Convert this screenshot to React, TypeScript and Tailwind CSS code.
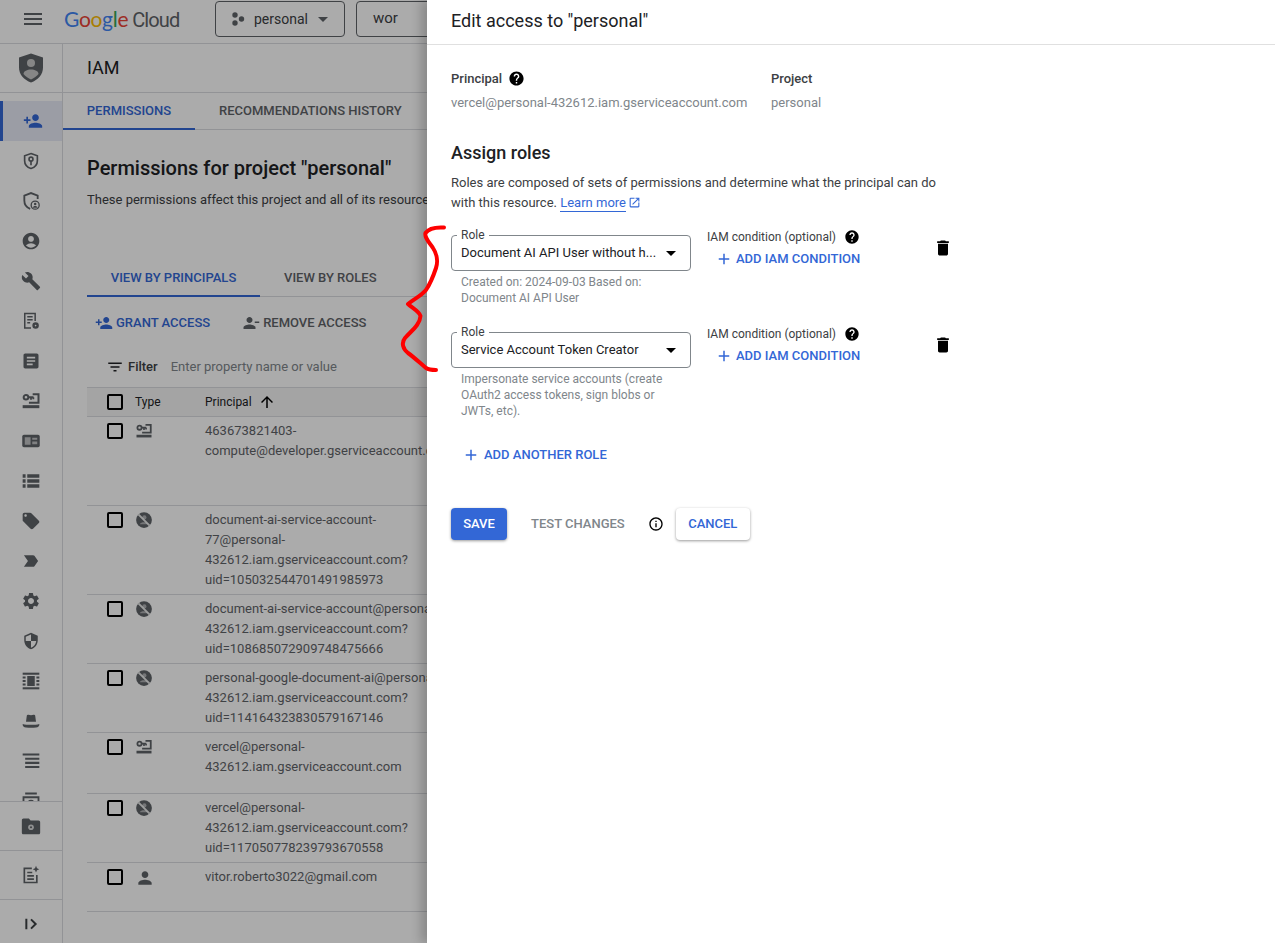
import React from "react";
import {
  MdMenu, MdArrowDropDown, MdPersonAdd, MdAccountCircle, MdBuild, MdArticle,
  MdLocalOffer, MdLabelImportant, MdSettings, MdSecurity, MdPersonRemove, MdFilterList,
  MdArrowUpward, MdPerson, MdHelp, MdAdd, MdDelete, MdInfoOutline, MdOpenInNew,
} from "react-icons/md";

const SA = ({ size = 18 }: { size?: number }) => (
  <svg width={size} height={size} viewBox="0 0 24 24" fill="none" stroke="currentColor">
    <circle cx="6" cy="7.500" r="2.800" strokeWidth="2.400" />
    <path d="M8.500 7.500h6.500M12 7.500v3M14.800 7.500v2.500" strokeWidth="2.200" />
    <path d="M14 3.800h7v10.400H9.500" strokeWidth="2.400" />
    <rect x="2" y="17" width="20" height="3.600" fill="currentColor" stroke="none" />
  </svg>
);
const Deleted = ({ size = 18 }: { size?: number }) => (
  <svg width={size} height={size} viewBox="0 0 24 24">
    <circle cx="12" cy="12" r="10.500" fill="currentColor" />
    <circle cx="12.500" cy="8.500" r="2.800" fill="#fff" opacity="0.5" />
    <path d="M6.500 17.500c1-3.500 10-3.500 11 0z" fill="#fff" opacity="0.5" />
    <path d="M4.500 4.500l15 15" stroke="#fff" strokeWidth="2.600" opacity="0.85" />
  </svg>
);
const ShieldKey = () => (
  <svg width="18" height="18" viewBox="0 0 24 24" fill="none" stroke="currentColor" strokeWidth="2.200">
    <path d="M12 2l8.500 3v6.500c0 5-3.600 8.800-8.500 10.500-4.900-1.700-8.500-5.500-8.500-10.500V5z" />
    <circle cx="12" cy="9.500" r="2.600" />
    <path d="M12 12v5.500" />
  </svg>
);
const ShieldUser = () => (
  <svg width="20" height="20" viewBox="0 0 24 24" fill="none" stroke="currentColor" strokeWidth="2.200">
    <path d="M11 21.500c-4.200-1.600-7-5.200-7-10v-6l8-3 8 3v4" />
    <circle cx="17" cy="17" r="4.800" strokeWidth="1.600" />
    <circle cx="17" cy="15.600" r="1.500" fill="currentColor" stroke="none" />
    <path d="M14 20c.5-2.500 5.500-2.500 6 0z" fill="currentColor" stroke="none" />
  </svg>
);
const DocGear = () => (
  <svg width="20" height="20" viewBox="0 0 24 24" fill="none" stroke="currentColor" strokeWidth="1.800">
    <path d="M12 20.500H4.500V3h12.500v9" />
    <path d="M7.500 7h6.500M7.500 10.500h6.500M7.500 14h3.500" />
    <circle cx="17.500" cy="17.500" r="3" fill="currentColor" />
    <circle cx="17.500" cy="17.500" r="1" fill="#fff" stroke="none" />
  </svg>
);
const IdCard = () => (
  <svg width="20" height="20" viewBox="0 0 24 24">
    <rect x="1.500" y="4.500" width="21" height="15" rx="2" fill="currentColor" />
    <rect x="4.500" y="7.500" width="7" height="9" fill="#fff" opacity="0.6" />
    <path d="M13.500 8h6v2.500h-6zM13.500 12.500h6V16h-6z" fill="#fff" opacity="0.6" />
  </svg>
);
const ThickList = () => (
  <svg width="20" height="20" viewBox="0 0 24 24" fill="currentColor">
    <path d="M2 4h3.500v4H2zM7.500 4H22v4H7.500zM2 10h3.500v4H2zM7.500 10H22v4H7.500zM2 16h3.500v4H2zM7.500 16H22v4H7.500z" />
  </svg>
);
const Stacked = () => (
  <svg width="20" height="20" viewBox="0 0 24 24" fill="currentColor">
    <rect x="2" y="2" width="20" height="2.500" />
    <rect x="2" y="19.500" width="20" height="2.500" />
    <rect x="7.500" y="6" width="9" height="12" />
    <path d="M2 6.500h3.500v2.500H2zM2 10.700h3.500v2.600H2zM2 15h3.500v2.500H2zM18.500 6.500H22v2.500h-3.500zM18.500 10.700H22v2.600h-3.500zM18.500 15H22v2.500h-3.500z" />
  </svg>
);
const Hat = () => (
  <svg width="20" height="20" viewBox="0 0 24 24" fill="currentColor">
    <path d="M6 13l1-7.500c.2-1 1-1.300 2-1 2 .7 4 .7 6 0 1-.3 1.800 0 2 1l1 7.500z" />
    <path d="M2 15.500c5 1.500 15 1.500 20 0 .3 2.800-1.500 4-4 4.300-4 .5-8 .5-12 0-2.500-.3-4.300-1.500-4-4.300z" />
  </svg>
);
const Lines = () => (
  <svg width="20" height="20" viewBox="0 0 24 24" fill="currentColor">
    <path d="M2 3h20v2.500H2zM5 8h17v2.500H5zM5 13h17v2.500H5zM5 18h17v2.500H5z" />
  </svg>
);
const ClippedIcon = () => (
  <svg width="20" height="20" viewBox="0 0 24 24" fill="none" stroke="currentColor" strokeWidth="2.200">
    <path d="M5 3h14M3 7.500h18v14H3z" />
    <circle cx="12" cy="14.500" r="3" fill="currentColor" />
  </svg>
);
const FolderGear = () => (
  <svg width="20" height="20" viewBox="0 0 24 24" fill="currentColor">
    <path d="M1 5c0-1 .8-2 2-2h6.500l2 2.500H21c1.200 0 2 1 2 2V20c0 1-.8 2-2 2H3c-1.200 0-2-1-2-2z" />
    <circle cx="12" cy="13.500" r="3.400" fill="#fff" opacity="0.75" />
    <circle cx="12" cy="13.500" r="1.300" fill="currentColor" />
  </svg>
);
const DocSpark = () => (
  <svg width="20" height="20" viewBox="0 0 24 24" fill="none" stroke="currentColor" strokeWidth="2">
    <path d="M13 4H4v17h15v-9" />
    <path d="M7.500 9h6M7.500 13h8M7.500 17h8" />
    <path d="M18 1l1.200 2.800L22 5l-2.800 1.200L18 9l-1.200-2.800L14 5l2.800-1.200z" fill="currentColor" stroke="none" />
  </svg>
);
const Collapse = () => (
  <svg width="16" height="16" viewBox="0 0 24 24" fill="none" stroke="currentColor" strokeWidth="3">
    <path d="M5 4v16M12 5l7 7-7 7" />
  </svg>
);
const IamLogo = () => (
  <svg width="26" height="30" viewBox="0 0 26 30">
    <path d="M13 0.500l12 4v10c0 7-5 12.500-12 15-7-2.500-12-8-12-15v-10z" fill="#5f6368" />
    <circle cx="13" cy="10" r="4" fill="#c8c8c8" />
    <path d="M5.500 21c0-6 15-6 15 0-2 2.500-5 4.500-7.500 5.500-2.500-1-5.500-3-7.500-5.500z" fill="#c8c8c8" />
  </svg>
);

const navIcons = [
  <MdPersonAdd size={20} />, <ShieldKey />, <ShieldUser />, <MdAccountCircle size={20} />, <MdBuild size={20} />,
  <DocGear />, <MdArticle size={20} />, <SA size={20} />, <IdCard />, <ThickList />,
  <MdLocalOffer size={20} />, <MdLabelImportant size={20} />, <MdSettings size={20} />, <MdSecurity size={18} />,
  <Stacked />, <Hat />, <Lines />, <ClippedIcon />,
];

type Row = { h: string; icon: React.ReactNode; lines: string[] };
const rows: Row[] = [
  { h: "h-[89px]", icon: <SA />, lines: ["463673821403-", "compute@developer.gserviceaccount.com"] },
  { h: "h-[89px]", icon: <Deleted />, lines: ["document-ai-service-account-", "77@personal-", "432612.iam.gserviceaccount.com?", "uid=105032544701491985973"] },
  { h: "h-[69px]", icon: <Deleted />, lines: ["document-ai-service-account@personal-", "432612.iam.gserviceaccount.com?", "uid=108685072909748475666"] },
  { h: "h-[69px]", icon: <Deleted />, lines: ["personal-google-document-ai@personal-", "432612.iam.gserviceaccount.com?", "uid=114164323830579167146"] },
  { h: "h-[61px]", icon: <SA />, lines: ["vercel@personal-", "432612.iam.gserviceaccount.com"] },
  { h: "h-[69px]", icon: <Deleted />, lines: ["vercel@personal-", "432612.iam.gserviceaccount.com?", "uid=117050778239793670558"] },
  { h: "h-[49px]", icon: <MdPerson size={20} />, lines: ["vitor.roberto3022@gmail.com"] },
];

const Check = () => <div className="w-4 h-4 border-2 border-black rounded-[2px] shrink-0" />;

const RoleRow = ({ value, hint, h }: { value: string; hint: string[]; h: string }) => (
  <div className={`flex ${h}`}>
    <div className="w-[240px] shrink-0">
      <div className="relative h-9 border border-[#80868b] rounded-[4px] flex items-center pl-[9px] pr-[7px] text-[13px] text-[#202124]">
        <span className="absolute -top-[8px] left-[5px] bg-white px-[4px] text-[12px] leading-[14px] text-[#3c4043]">Role</span>
        <span className="flex-1 whitespace-nowrap overflow-hidden">{value}</span>
        <MdArrowDropDown size={24} className="text-black" />
      </div>
      <div className="pl-[10px] pt-[3px] text-[12px] leading-4 text-[#80868b]">
        {hint.map((l) => <div key={l} className="whitespace-nowrap">{l}</div>)}
      </div>
    </div>
    <div className="ml-4 w-[228px] shrink-0">
      <div className="flex items-center h-4 text-[12px] text-[#3c4043] mt-[-6px]">
        <span>IAM condition (optional)</span>
        <MdHelp size={16} className="ml-[8px] text-black" />
      </div>
      <div className="flex items-center mt-[4px] ml-[9px] text-[13px] font-medium text-[#3367d6] whitespace-nowrap">
        <MdAdd size={18} className="mr-[3px] -ml-[1px]" />
        <span>ADD IAM CONDITION</span>
      </div>
    </div>
    <div className="pt-[3px] -ml-[2px]">
      <MdDelete size={20} className="text-black" />
    </div>
  </div>
);

export default function App() {
  return (
    <div className="relative w-[1275px] h-[943px] overflow-hidden bg-white text-[13px] text-[#3c4043] font-['Roboto',sans-serif]">
      {/* Page underneath */}
      <div className="flex flex-col h-full">
        <header className="h-11 shrink-0 border-b border-[#dadce0] flex items-center pl-[21px] pb-[6px]">
          <MdMenu size={24} className="text-[#5f6368]" />
          <div className="ml-[19px] w-[151px] text-[21px] tracking-[-0.3px] whitespace-nowrap font-['Lato',sans-serif]">
            <span className="text-[#4285f4]">G</span>
            <span className="text-[#ea4335]">o</span>
            <span className="text-[#fbbc04]">o</span>
            <span className="text-[#4285f4]">g</span>
            <span className="text-[#34a853]">l</span>
            <span className="text-[#ea4335]">e</span>
            <span className="text-[#5f6368] ml-[4px] text-[20px] tracking-[-0.9px] font-['Roboto',sans-serif]">Cloud</span>
          </div>
          <div className="w-[130px] h-[36px] border border-[#5f6368] rounded-[4px] flex items-center pl-[15px] text-[14px] text-[#3c4043]">
            <svg width="14" height="14" viewBox="0 0 14 14" fill="#5f6368" className="mr-[9px]">
              <circle cx="4" cy="3" r="2.700" /><circle cx="4" cy="11" r="2.700" /><circle cx="10.500" cy="7" r="2.700" />
            </svg>
            <span className="translate-y-[1px]">personal</span>
            <MdArrowDropDown size={24} className="ml-[3px] text-[#5f6368]" />
          </div>
          <div className="ml-[11px] w-[300px] h-[36px] border border-[#5f6368] rounded-[4px] flex items-center pl-4 text-[15px] text-[#3c4043]">wor</div>
        </header>
        <div className="flex flex-1 min-h-0">
          <aside className="w-[63px] shrink-0 border-r border-[#dadce0] flex flex-col text-[#5f6368]">
            <div className="h-[49px] border-b border-[#dadce0] flex items-center justify-center shrink-0 pb-[1px]"><IamLogo /></div>
            <nav className="h-[708px] pt-[8px] overflow-hidden shrink-0">
              {navIcons.map((ic, i) => (
                <div key={i} className={i === 0
                  ? "h-10 flex items-center justify-center bg-[#e8eaf6] border-l-[3px] border-[#3367d6] text-[#3367d6]"
                  : "h-10 flex items-center justify-center"}>{ic}</div>
              ))}
            </nav>
            <div className="h-[49px] border-t border-[#dadce0] flex items-center justify-center shrink-0"><FolderGear /></div>
            <div className="h-[49px] border-t border-[#dadce0] flex items-center justify-center shrink-0"><DocSpark /></div>
            <div className="flex-1 border-t border-[#dadce0] flex items-center justify-center text-[#3c4043] pt-[4px]"><Collapse /></div>
          </aside>
          <main className="flex-1 min-w-0">
            <div className="h-[49px] border-b border-[#dadce0] pl-6 pb-[2px] flex items-center text-[18px] text-[#202124]">IAM</div>
            <div className="h-[37px] border-b border-[#dadce0] flex font-medium text-[#5f6368]">
              <div className="w-[132px] h-[37px] border-b-2 border-[#3367d6] text-[#3367d6] flex items-center justify-center">PERMISSIONS</div>
              <div className="ml-[24px] flex items-center">RECOMMENDATIONS HISTORY</div>
            </div>
            <div className="pl-6">
              <h1 className="mt-[24px] text-[20px] leading-7 font-medium text-[#202124]">Permissions for project "personal"</h1>
              <p className="mt-[8px] leading-5 text-[#3c4043] whitespace-nowrap">These permissions affect this project and all of its resources.</p>
              <div className="mt-[48px] h-[39px] border-b border-[#dadce0] flex font-medium text-[#5f6368]">
                <div className="w-[173px] h-[39px] border-b-2 border-[#3367d6] text-[#3367d6] flex items-center justify-center pt-[2px]">VIEW BY PRINCIPALS</div>
                <div className="ml-[24px] flex items-center pt-[2px]">VIEW BY ROLES</div>
              </div>
              <div className="h-[52px] flex items-center font-medium pl-[8px]">
                <div className="flex items-center text-[#3367d6]">
                  <MdPersonAdd size={18} className="mr-[3px]" />GRANT ACCESS
                </div>
                <div className="flex items-center text-[#5f6368] ml-[32px]">
                  <MdPersonRemove size={18} className="mr-[3px]" />REMOVE ACCESS
                </div>
              </div>
              <div className="h-[39px] flex items-center pl-[19px] -mt-[1px] pb-[2px]">
                <MdFilterList size={18} className="text-[#202124]" />
                <span className="ml-[4px] font-medium text-[#3c4043]">Filter</span>
                <span className="ml-[13px] text-[#80868b]">Enter property name or value</span>
              </div>
              <div className="h-[30px] border-y border-[#dadce0] bg-[#f5f5f5] flex items-center text-[12px] text-[#202124]">
                <div className="ml-[20px]"><Check /></div>
                <span className="ml-[12px] w-[70px]">Type</span>
                <span>Principal</span>
                <MdArrowUpward size={18} className="ml-[6px] text-black" />
              </div>
              {rows.map((r, i) => (
                <div key={i} className={`${r.h} border-b border-[#dadce0] flex items-start`}>
                  <div className="ml-[20px] mt-[6px]"><Check /></div>
                  <div className="ml-[12px] w-[70px] mt-[5px] text-[#5f6368]">{r.icon}</div>
                  <div className="mt-[4px] leading-5 text-[#5f6368]">
                    {r.lines.map((l) => <div key={l} className="whitespace-nowrap">{l}</div>)}
                  </div>
                </div>
              ))}
            </div>
          </main>
        </div>
      </div>

      {/* Backdrop */}
      <div className="absolute inset-0 bg-black/[0.33]" />

      {/* Side panel */}
      <div className="absolute top-0 bottom-0 left-[427px] right-0 bg-white shadow-[-6px_0_10px_rgba(0,0,0,0.2)]">
        <div className="h-[45px] border-b border-[#e0e0e0] pl-6 flex items-center pb-[4px] text-[18px] text-[#202124]">Edit access to "personal"</div>
        <div className="pl-6">
          <div className="flex mt-[24px]">
            <div className="w-[320px]">
              <div className="flex items-center h-5 font-medium text-[#3c4043]">
                Principal
                <MdHelp size={17} className="ml-[6px] mb-[2px] text-black" />
              </div>
              <div className="mt-1 leading-5 text-[#80868b]">vercel@personal-432612.iam.gserviceaccount.com</div>
            </div>
            <div>
              <div className="h-5 leading-5 font-medium text-[#3c4043]">Project</div>
              <div className="mt-1 leading-5 text-[#80868b]">personal</div>
            </div>
          </div>
          <h2 className="mt-[28px] text-[18px] leading-6 font-medium text-[#202124]">Assign roles</h2>
          <p className="mt-[8px] w-[500px] leading-5 text-[#3c4043]">
            Roles are composed of sets of permissions and determine what the principal can do
            <br />
            with this resource.{" "}
            <span className="text-[#3367d6] border-b border-[#3367d6] pb-[1px]">Learn more</span>
            <MdOpenInNew size={13} className="inline ml-[2px] mb-[2px] text-[#3367d6]" />
          </p>
          <div className="mt-[22px]">
            <RoleRow h="h-[97px]" value="Document AI API User without h..." hint={["Created on: 2024-09-03 Based on:", "Document AI API User"]} />
            <RoleRow h="h-[97px]" value="Service Account Token Creator" hint={["Impersonate service accounts (create", "OAuth2 access tokens, sign blobs or", "JWTs, etc)."]} />
          </div>
          <div className="flex items-center mt-[16px] ml-[12px] font-medium text-[#3367d6]">
            <MdAdd size={18} className="mr-[4px] -ml-[1px]" />ADD ANOTHER ROLE
          </div>
          <div className="flex items-center mt-[43px] font-medium">
            <div className="w-14 h-8 rounded-[4px] bg-[#3367d6] text-white flex items-center justify-center shadow-[0_1px_3px_rgba(0,0,0,0.4)]">SAVE</div>
            <div className="ml-6 text-[#80868b]">TEST CHANGES</div>
            <MdInfoOutline size={16} className="ml-[23px] text-black" />
            <div className="ml-[12px] w-[74px] h-8 rounded-[4px] bg-white text-[#3367d6] flex items-center justify-center shadow-[0_1px_3px_rgba(0,0,0,0.4)]">CANCEL</div>
          </div>
        </div>
      </div>

      {/* Red hand-drawn annotation */}
      <svg className="absolute left-0 top-0 pointer-events-none" width="1275" height="943" fill="none">
        <path
          d="M444 227.500C436 227 429 228 425.500 233C424 238 430 243 433 248C437 254 438 262 436 268C433 277 430 284 426 290C421 296 414 299 408 304C412 308 419 311 420.500 316C420 325 411 331 405 338C401 343 403 349 408 353C415 358 421 364 426 368C429 370 432 370 436 370"
          stroke="#fe0000"
          strokeWidth="4"
          strokeLinecap="round"
          strokeLinejoin="round"
        />
      </svg>
    </div>
  );
}
